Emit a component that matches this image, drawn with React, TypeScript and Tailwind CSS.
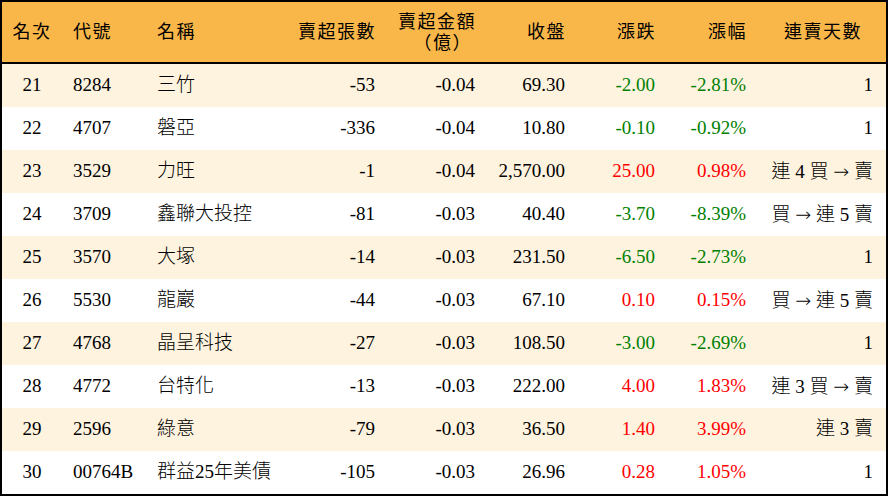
const rows = [
  { rank: "21", code: "8284", name: "三竹", vol: "-53", amt: "-0.04", close: "69.30", chg: "-2.00", pct: "-2.81%", days: "1" },
  { rank: "22", code: "4707", name: "磐亞", vol: "-336", amt: "-0.04", close: "10.80", chg: "-0.10", pct: "-0.92%", days: "1" },
  { rank: "23", code: "3529", name: "力旺", vol: "-1", amt: "-0.04", close: "2,570.00", chg: "25.00", pct: "0.98%", days: "連 4 買 → 賣" },
  { rank: "24", code: "3709", name: "鑫聯大投控", vol: "-81", amt: "-0.03", close: "40.40", chg: "-3.70", pct: "-8.39%", days: "買 → 連 5 賣" },
  { rank: "25", code: "3570", name: "大塚", vol: "-14", amt: "-0.03", close: "231.50", chg: "-6.50", pct: "-2.73%", days: "1" },
  { rank: "26", code: "5530", name: "龍巖", vol: "-44", amt: "-0.03", close: "67.10", chg: "0.10", pct: "0.15%", days: "買 → 連 5 賣" },
  { rank: "27", code: "4768", name: "晶呈科技", vol: "-27", amt: "-0.03", close: "108.50", chg: "-3.00", pct: "-2.69%", days: "1" },
  { rank: "28", code: "4772", name: "台特化", vol: "-13", amt: "-0.03", close: "222.00", chg: "4.00", pct: "1.83%", days: "連 3 買 → 賣" },
  { rank: "29", code: "2596", name: "綠意", vol: "-79", amt: "-0.03", close: "36.50", chg: "1.40", pct: "3.99%", days: "連 3 賣" },
  { rank: "30", code: "00764B", name: "群益25年美債", vol: "-105", amt: "-0.03", close: "26.96", chg: "0.28", pct: "1.05%", days: "1" },
];

const cols = "grid grid-cols-[60px_84px_124px_117px_100px_90px_90px_91px_128px]";

// streak text; the arrow gets a thinner, wider face like the original
function Days({ text }: { text: string }) {
  const parts = text.split("→");
  if (parts.length === 1) return <>{text}</>;
  return (
    <>
      {parts[0]}
      <span className="text-[19px] font-extralight" style={{ fontFamily: '"DejaVu Sans", sans-serif' }}>
        →
      </span>
      {parts[1]}
    </>
  );
}

export default function App() {
  return (
    <div
      className="w-[888px] h-[496px] border-2 border-black bg-white text-[19px] font-light text-black overflow-hidden"
      style={{ fontFamily: '"Liberation Serif", "Noto Sans CJK TC", serif' }}
    >
      {/* header */}
      <div className={`${cols} h-[62px] bg-[#f9b74a] border-b-2 border-black items-center text-[18px] font-normal tracking-[1.5px] leading-[21px]`}>
        <div className="text-center">名次</div>
        <div className="pl-[11px]">代號</div>
        <div className="pl-[11px]">名稱</div>
        <div className="text-right pr-[11px]">賣超張數</div>
        <div className="text-right pr-[11px] pt-[1px]">
          <div>賣超金額</div>
          <div className="pr-[4px]">（億）</div>
        </div>
        <div className="text-right pr-[11px]">收盤</div>
        <div className="text-right pr-[11px]">漲跌</div>
        <div className="text-right pr-[11px]">漲幅</div>
        <div className="text-right pr-[24px]">連賣天數</div>
      </div>

      {rows.map((r, i) => {
        const up = !r.chg.startsWith("-");
        const tone = up ? "text-[#ff0000]" : "text-[#008000]";
        return (
          <div
            key={r.rank}
            className={`${cols} h-[43px] items-center ${i % 2 === 0 ? "bg-[#fef3df]" : "bg-white"}`}
          >
            <div className="text-center">{r.rank}</div>
            <div className="pl-[11px]">{r.code}</div>
            <div className="pl-[11px] whitespace-nowrap">{r.name}</div>
            <div className="text-right pr-[12px]">{r.vol}</div>
            <div className="text-right pr-[12px]">{r.amt}</div>
            <div className="text-right pr-[12px]">{r.close}</div>
            <div className={`text-right pr-[12px] ${tone}`}>{r.chg}</div>
            <div className={`text-right pr-[12px] ${tone}`}>{r.pct}</div>
            <div className="text-right pr-[13px] whitespace-nowrap">
              <Days text={r.days} />
            </div>
          </div>
        );
      })}
    </div>
  );
}
